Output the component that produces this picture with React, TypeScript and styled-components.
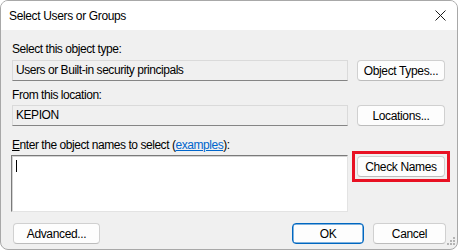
import styled, {createGlobalStyle, css} from "styled-components";

const GlobalStyle = createGlobalStyle`
  html, body {
    margin: 0;
    padding: 0;
    background: #ffffff;
  }
  body {
    font-family: "Liberation Sans", Arial, sans-serif;
    font-size: 12px;
    color: #000000;
  }
`

const Window = styled.div`
  position: relative;
  box-sizing: border-box;
  width: 458px;
  height: 250px;
  display: flex;
  flex-direction: column;
  border: 1px solid #a8a8a8;
  border-radius: 8px;
  overflow: hidden;
  background: #f0f0f0;
`

const TitleBar = styled.div`
  height: 29px;
  flex-shrink: 0;
  display: flex;
  align-items: center;
  justify-content: space-between;
  padding: 0 10px 0 8px;
  background: #ffffff;
`

const Title = styled.span`
  font-size: 12px;
  letter-spacing: -0.35px;
  padding-top: 1px;
`

const CloseButton = styled.span`
  display: flex;
  width: 12px;
  height: 12px;
  margin-right: 1px;
  align-items: center;
  justify-content: center;
`

const Body = styled.div`
  flex: 1;
  display: flex;
  flex-direction: column;
  padding: 11px 11px 0 11px;
`

const Label = styled.div<{ $mt?: number }>`
  height: 16px;
  line-height: 16px;
  margin-top: ${p => p.$mt ?? 0}px;
  letter-spacing: -0.45px;
`

const Row = styled.div<{ $mt?: number }>`
  display: flex;
  align-items: flex-start;
  gap: 9px;
  margin-top: ${p => p.$mt ?? 0}px;
`

const Field = styled.div`
  box-sizing: border-box;
  width: 336px;
  height: 21px;
  padding: 0 3px;
  line-height: 19px;
  border: 1px solid #dadada;
  border-bottom-color: #858585;
  background: #f0f0f0;
  letter-spacing: -0.45px;
`

const NameBox = styled.div`
  position: relative;
  box-sizing: border-box;
  width: 337px;
  height: 57px;
  margin-left: -1px;
  background: #ffffff;
  border: 1px solid #e3e3e3;
  border-top-color: #7a7a7a;
  border-left-color: #7a7a7a;
  box-shadow: inset 1px 1px 0 #d4d4d4;
`

const Caret = styled.span`
  position: absolute;
  left: 4px;
  top: 4px;
  width: 1px;
  height: 12px;
  background: #000000;
`

const Button = styled.button<{ $width?: number; $primary?: boolean }>`
  box-sizing: border-box;
  width: ${p => p.$width ?? 88}px;
  height: 21px;
  padding: 0;
  font-family: inherit;
  font-size: 12px;
  letter-spacing: -0.35px;
  color: #000000;
  background: #fdfdfd;
  border: 1px solid #d0d0d0;
  border-bottom-color: #bcbcbc;
  border-radius: 4px;
  ${p => p.$primary && css`
    border-color: #0067c0;
    box-shadow: inset 0 0 0 0.5px #0067c0;
  `}
`

/* red annotation frame drawn round the Check Names button */
const Highlight = styled.div`
  display: flex;
  margin: -4px -4px 0 -5px;
  padding: 2px;
  border: 3px solid #e81123;
`

const Footer = styled.div`
  display: flex;
  align-items: center;
  margin-top: 11px;
  padding-left: 1px;
`

const Spacer = styled.div`
  flex: 1;
`

const FooterButtons = styled.div`
  display: flex;
  gap: 9px;
`

const Mnemonic = styled.span`
  text-decoration: underline;
`

const Link = styled.span`
  color: #0066cc;
  text-decoration: underline;
`

const Grip = styled.svg`
  position: absolute;
  right: 1px;
  bottom: 1px;
`

export default function App() {
  return (
    <>
      <GlobalStyle/>
      <Window>
        <TitleBar>
          <Title>Select Users or Groups</Title>
          <CloseButton>
            <svg width="11" height="11" viewBox="0 0 11 11">
              <path d="M0.5 0.5 L10.5 10.5 M10.5 0.5 L0.5 10.5" stroke="#1a1a1a" strokeWidth="1" fill="none"/>
            </svg>
          </CloseButton>
        </TitleBar>
        <Body>
          <Label>Select this object type:</Label>
          <Row $mt={3}>
            <Field>Users or Built-in security principals</Field>
            <Button>Object Types...</Button>
          </Row>
          <Label $mt={6}>From this location:</Label>
          <Row $mt={2}>
            <Field>KEPION</Field>
            <Button>Locations...</Button>
          </Row>
          <Label $mt={11}>
            <Mnemonic>E</Mnemonic>nter the object names to select (<Link>examples</Link>):
          </Label>
          <Row $mt={2}>
            <NameBox><Caret/></NameBox>
            <Highlight>
              <Button>Check Names</Button>
            </Highlight>
          </Row>
          <Footer>
            <Button $width={87}>Advanced...</Button>
            <Spacer/>
            <FooterButtons>
              <Button $width={72} $primary>OK</Button>
              <Button $width={73}>Cancel</Button>
            </FooterButtons>
          </Footer>
        </Body>
        <Grip width="11" height="11" viewBox="0 0 11 11">
          <g fill="#b4b4b4">
            <rect x="8" y="0" width="2" height="2"/>
            <rect x="5" y="3" width="2" height="2"/>
            <rect x="8" y="3" width="2" height="2"/>
            <rect x="2" y="6" width="2" height="2"/>
            <rect x="5" y="6" width="2" height="2"/>
            <rect x="8" y="6" width="2" height="2"/>
          </g>
        </Grip>
      </Window>
    </>
  )
}
